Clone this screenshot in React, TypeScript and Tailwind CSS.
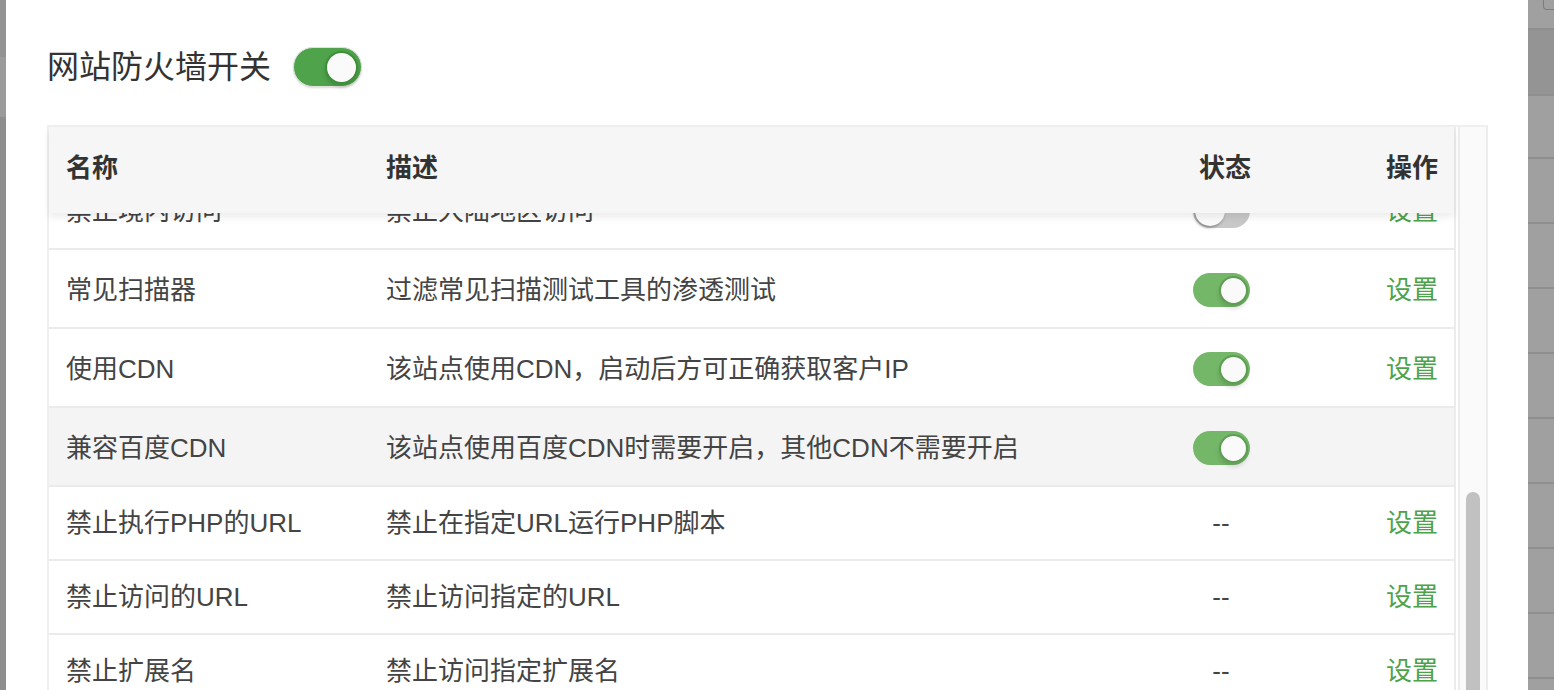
import React from "react";

type Rule = {
  name: string;
  desc: string;
  state: "on" | "off" | "none";
  action: boolean;
  hover?: boolean;
};

const RULES: Rule[] = [
  { name: "禁止境内访问", desc: "禁止大陆地区访问", state: "off", action: true },
  { name: "常见扫描器", desc: "过滤常见扫描测试工具的渗透测试", state: "on", action: true },
  { name: "使用CDN", desc: "该站点使用CDN，启动后方可正确获取客户IP", state: "on", action: true },
  {
    name: "兼容百度CDN",
    desc: "该站点使用百度CDN时需要开启，其他CDN不需要开启",
    state: "on",
    action: false,
    hover: true,
  },
  { name: "禁止执行PHP的URL", desc: "禁止在指定URL运行PHP脚本", state: "none", action: true },
  { name: "禁止访问的URL", desc: "禁止访问指定的URL", state: "none", action: true },
  { name: "禁止扩展名", desc: "禁止访问指定扩展名", state: "none", action: true },
  { name: "禁止上传的文件类型", desc: "禁止上传指定的文件类型", state: "none", action: true },
];

const FONT = "font-['Liberation_Sans','Noto_Sans_CJK_SC',sans-serif]";

function Switch({ on }: { on: boolean }) {
  if (!on) {
    return (
      <div className="flex h-[34px] w-[57px] items-center rounded-full bg-[#c8c8c8] px-[2px]">
        <div className="h-[30px] w-[30px] rounded-full bg-[#fafafa] shadow-[-1px_2px_3px_rgba(0,0,0,0.3)]" />
      </div>
    );
  }
  return (
    <div className="flex h-[34px] w-[57px] items-center justify-end rounded-full bg-[#74b768] px-[2px]">
      <div className="h-[29px] w-[29px] rounded-full border-[2px] border-[#5d9e53] bg-[#fafafa] shadow-[0_4px_4px_rgba(0,0,0,0.12)]" />
    </div>
  );
}

function BigSwitch() {
  return (
    <div className="flex h-[40px] w-[69px] items-center justify-end rounded-full border border-[#e2e2e2] bg-[#4fa34a] px-[3px] shadow-[0_1px_2px_rgba(0,0,0,0.15)]">
      <div className="h-[33px] w-[33px] rounded-full border-[2px] border-[#3f8f3a] bg-[#fafafa] shadow-[0_3px_4px_rgba(0,0,0,0.15)]" />
    </div>
  );
}

function Row({ rule }: { rule: Rule }) {
  const tall = rule.state !== "none";
  return (
    <div
      className={`grid grid-cols-[320px_784px_102px_1fr] items-center border-b-2 border-[#ebebeb] pl-[17px] pr-[16px] text-[26px] text-[#444] ${
        tall ? "h-[79px] pt-[3px]" : "h-[74px] pt-[1px]"
      } ${rule.hover ? "bg-[#f4f4f4]" : "bg-white"}`}
    >
      <div className="whitespace-nowrap">{rule.name}</div>
      <div className="whitespace-nowrap">{rule.desc}</div>
      <div className="flex justify-center">
        {rule.state === "none" ? (
          <span className="text-[#444]">--</span>
        ) : (
          <Switch on={rule.state === "on"} />
        )}
      </div>
      <div className="text-right text-[#4da34a]">{rule.action ? "设置" : ""}</div>
    </div>
  );
}

function BackdropRight() {
  const bands = [30, 66, 63, 65, 65, 65, 65, 65, 65, 65, 65];
  return (
    <div className="flex w-[26px] flex-col bg-[#a0a0a0]">
      <div className="ml-[15px] h-[10px] w-[20px] rounded-b-[4px] border border-t-0 border-[#7d7d7d]" />
      {bands.map((h, i) => (
        <div
          key={i}
          style={{ height: i === 0 ? h - 10 : h }}
          className={`border-b-2 border-[#8f8f8f] ${i === 1 ? "bg-[#949494]" : "bg-[#a0a0a0]"}`}
        />
      ))}
    </div>
  );
}

export default function App() {
  return (
    <div className={`flex h-[690px] w-[1554px] overflow-hidden bg-white ${FONT}`}>
      <div className="flex w-[8px] flex-col">
        <div className="h-[57px] bg-[#939393]" />
        <div className="h-[60px] bg-[#9b9b9b]" />
        <div className="flex-1 bg-[#8e8e8e]" />
      </div>

      <div className="flex flex-1 flex-col bg-white pl-[41px] pr-[40px]">
        <div className="flex h-[125px] items-center gap-[22px] pt-[9px]">
          <span className="text-[32px] text-[#333]">网站防火墙开关</span>
          <BigSwitch />
        </div>

        <div className="flex min-h-0 flex-1 border-l-2 border-t-2 border-[#efefef]">
          <div className="relative flex min-h-0 w-[1407px] flex-col border-r-2 border-[#ececec]">
            <div className="relative z-10 grid h-[86px] grid-cols-[320px_784px_102px_1fr] items-center bg-[#f6f6f6] pb-[3px] pl-[17px] pr-[16px] text-[26px] font-bold text-[#333] shadow-[0_4px_8px_rgba(0,0,0,0.08)]">
              <div>名称</div>
              <div>描述</div>
              <div className="pl-[29px]">状态</div>
              <div className="text-right">操作</div>
            </div>
            <div className="min-h-0 flex-1 overflow-hidden">
              <div className="-mt-[42px]">
                {RULES.map((r) => (
                  <Row key={r.name} rule={r} />
                ))}
              </div>
            </div>
          </div>

          <div className="ml-[2px] flex w-[30px] flex-col border-x-2 border-[#ededed] bg-[#fafafa] px-[6px] pt-[365px]">
            <div className="flex-1 rounded-t-full bg-[#c1c1c1]" />
          </div>
        </div>
      </div>

      <BackdropRight />
    </div>
  );
}
